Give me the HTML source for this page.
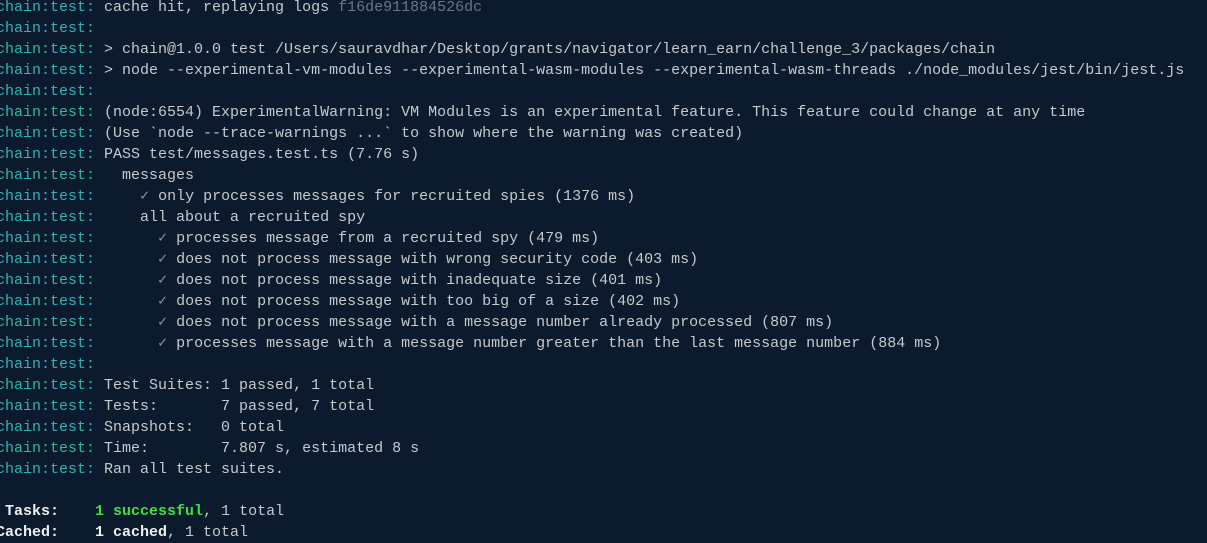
<!DOCTYPE html>
<html><head><meta charset="utf-8"><style>
html,body{margin:0;padding:0;background:#0b1a2c;width:1207px;height:538px;overflow:hidden}
pre{position:absolute;left:-4px;top:-3px;margin:0;font-family:"Liberation Mono","DejaVu Sans Mono",monospace;font-size:15px;line-height:21px;color:#c6c9cd;white-space:pre}
.p{color:#2fb5b5}
.d{color:#6c7582}
.c{color:#8a9099}
.b{font-weight:bold;color:#eef0f2}
.g{font-weight:bold;color:#3ee23e}
</style></head><body><pre><span class="p">chain:test:</span> cache hit, replaying logs <span class="d">f16de911884526dc</span>
<span class="p">chain:test:</span>
<span class="p">chain:test:</span> &gt; chain@1.0.0 test /Users/sauravdhar/Desktop/grants/navigator/learn_earn/challenge_3/packages/chain
<span class="p">chain:test:</span> &gt; node --experimental-vm-modules --experimental-wasm-modules --experimental-wasm-threads ./node_modules/jest/bin/jest.js
<span class="p">chain:test:</span>
<span class="p">chain:test:</span> (node:6554) ExperimentalWarning: VM Modules is an experimental feature. This feature could change at any time
<span class="p">chain:test:</span> (Use `node --trace-warnings ...` to show where the warning was created)
<span class="p">chain:test:</span> PASS test/messages.test.ts (7.76 s)
<span class="p">chain:test:</span>   messages
<span class="p">chain:test:</span>     <span class="c">✓</span> only processes messages for recruited spies (1376 ms)
<span class="p">chain:test:</span>     all about a recruited spy
<span class="p">chain:test:</span>       <span class="c">✓</span> processes message from a recruited spy (479 ms)
<span class="p">chain:test:</span>       <span class="c">✓</span> does not process message with wrong security code (403 ms)
<span class="p">chain:test:</span>       <span class="c">✓</span> does not process message with inadequate size (401 ms)
<span class="p">chain:test:</span>       <span class="c">✓</span> does not process message with too big of a size (402 ms)
<span class="p">chain:test:</span>       <span class="c">✓</span> does not process message with a message number already processed (807 ms)
<span class="p">chain:test:</span>       <span class="c">✓</span> processes message with a message number greater than the last message number (884 ms)
<span class="p">chain:test:</span>
<span class="p">chain:test:</span> Test Suites: 1 passed, 1 total
<span class="p">chain:test:</span> Tests:       7 passed, 7 total
<span class="p">chain:test:</span> Snapshots:   0 total
<span class="p">chain:test:</span> Time:        7.807 s, estimated 8 s
<span class="p">chain:test:</span> Ran all test suites.

<span class="b"> Tasks:</span>    <span class="g">1 successful</span>, 1 total
<span class="b">Cached:</span>    <span class="b">1 cached</span>, 1 total
</pre></body></html>
